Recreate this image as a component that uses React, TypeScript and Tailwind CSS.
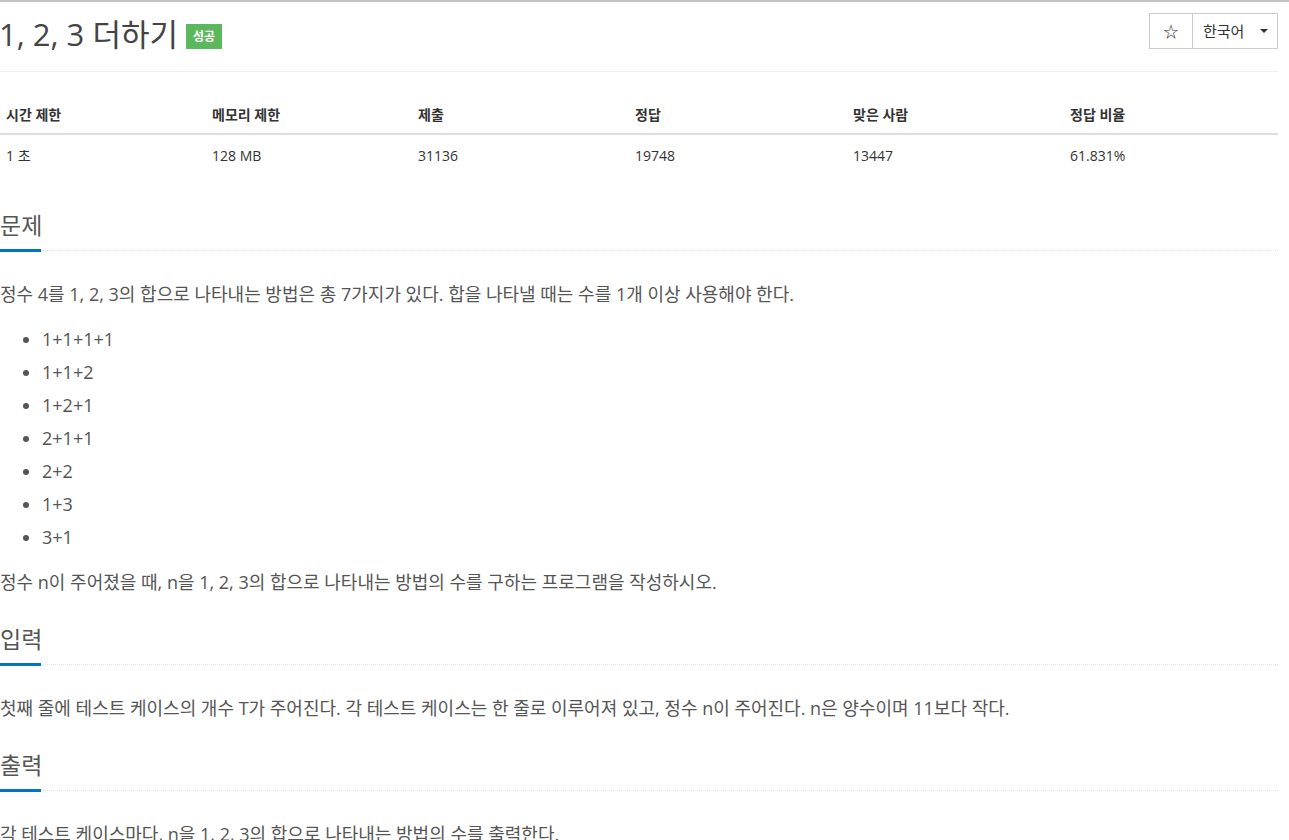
import { ReactNode } from "react";

const FONT = { fontFamily: '"Open Sans", "Noto Sans CJK KR", sans-serif' };

const stats = [
  { label: "시간 제한", value: "1 초" },
  { label: "메모리 제한", value: "128 MB" },
  { label: "제출", value: "31136" },
  { label: "정답", value: "19748" },
  { label: "맞은 사람", value: "13447" },
  { label: "정답 비율", value: "61.831%" },
];

const cases = ["1+1+1+1", "1+1+2", "1+2+1", "2+1+1", "2+2", "1+3", "3+1"];

// section heading with the short blue underline over a dotted rule
function Section({ title, first, children }: { title: string; first?: boolean; children: ReactNode }) {
  return (
    <section className={first ? "mt-[33px]" : "mt-[27px]"}>
      <div className="relative border-b border-dotted border-[#dde3ee] h-[43px]">
        <h2 className="text-[23px] leading-[34px] text-[#555] pl-[2px]">{title}</h2>
        <div className="absolute left-0 bottom-[-2px] w-[43px] h-[3px] bg-[#0076c0]" />
      </div>
      <div className="pt-[30px] pl-[2px] text-[18px] leading-[26px] text-[#555]">{children}</div>
    </section>
  );
}

export default function App() {
  return (
    <div className="min-h-screen bg-white border-t-2 border-[#c4c4c4] overflow-hidden" style={FONT}>
      <div className="w-[1280px] -ml-[2px]">
        <div className="flex justify-between items-start h-[70px] border-b border-[#eee]">
          <div className="flex items-center pt-[12px]">
            <h1 className="text-[31px] leading-[40px] text-[#444] pl-[1px]">1, 2, 3 더하기</h1>
            <span className="ml-[8px] mt-[4px] bg-[#5cb85c] text-white text-[12px] font-bold leading-[25px] px-[7px] h-[25px]">
              성공
            </span>
          </div>
          <div className="flex mt-[11px] border border-[#ccc] text-[15px] text-[#333] h-[36px]">
            <div className="w-[43px] flex items-center justify-center border-r border-[#ccc] text-[15px]">☆</div>
            <div className="w-[84px] flex items-center justify-between pl-[10px] pr-[9px]">
              <span>한국어</span>
              <svg width="8" height="4" viewBox="0 0 8 4"><path d="M0 0h8L4 4z" fill="#333" /></svg>
            </div>
          </div>
        </div>

        <div className="mt-[25px] text-[14px] text-[#333]">
          <div className="grid grid-cols-[206px_206px_217px_218px_217px_1fr] border-b-2 border-[#ddd] h-[38px] items-start pt-[8px]">
            {stats.map((s) => (
              <div key={s.label} className="pl-[8px] font-bold leading-[20px]">{s.label}</div>
            ))}
          </div>
          <div className="grid grid-cols-[206px_206px_217px_218px_217px_1fr] h-[40px] items-center">
            {stats.map((s) => (
              <div key={s.label} className="pl-[8px]">{s.value}</div>
            ))}
          </div>
        </div>

        <Section title="문제" first>
          <p>정수 4를 1, 2, 3의 합으로 나타내는 방법은 총 7가지가 있다. 합을 나타낼 때는 수를 1개 이상 사용해야 한다.</p>
          <ul className="list-disc pl-[42px] mt-[16px]">
            {cases.map((c) => (
              <li key={c} className="leading-[33px]">{c}</li>
            ))}
          </ul>
          <p className="mt-[15px]">정수 n이 주어졌을 때, n을 1, 2, 3의 합으로 나타내는 방법의 수를 구하는 프로그램을 작성하시오.</p>
        </Section>

        <Section title="입력">
          <p>첫째 줄에 테스트 케이스의 개수 T가 주어진다. 각 테스트 케이스는 한 줄로 이루어져 있고, 정수 n이 주어진다. n은 양수이며 11보다 작다.</p>
        </Section>

        <Section title="출력">
          <p>각 테스트 케이스마다, n을 1, 2, 3의 합으로 나타내는 방법의 수를 출력한다.</p>
        </Section>
      </div>
    </div>
  );
}
